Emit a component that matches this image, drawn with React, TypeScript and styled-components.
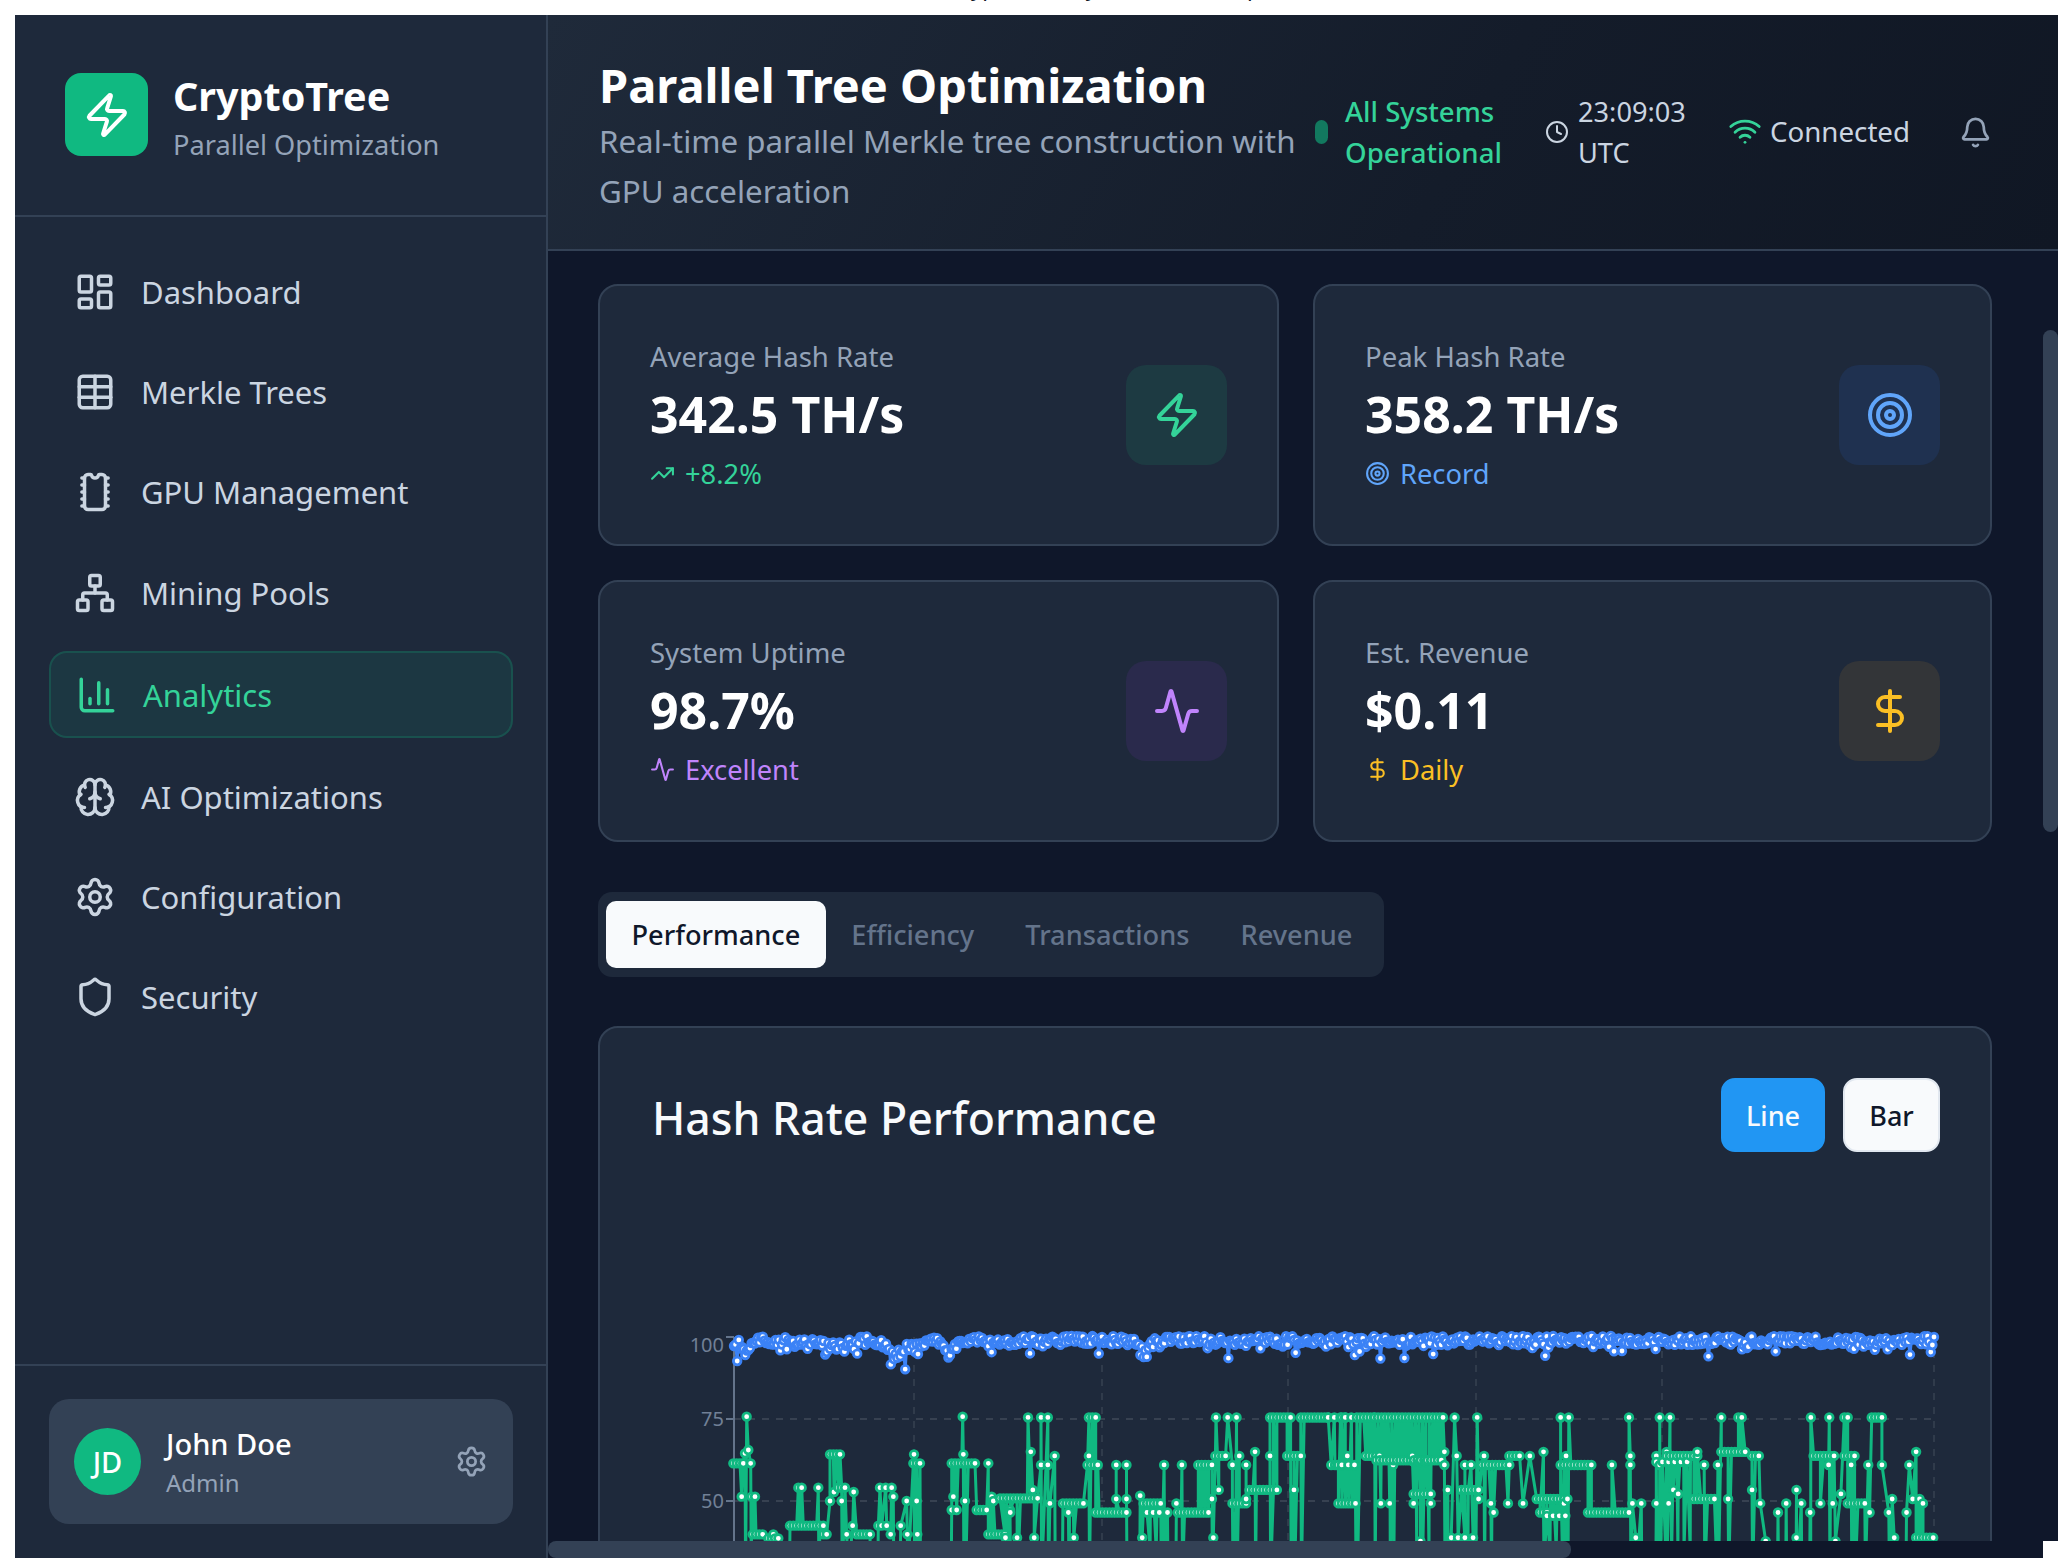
import React from "react";
import styled, { createGlobalStyle } from "styled-components";
import {
  Activity,
  Bell,
  Brain,
  ChartColumn,
  Clock,
  DollarSign,
  LayoutDashboard,
  Network,
  Settings,
  Shield,
  Table,
  Target,
  TrendingUp,
  Wifi,
  Zap,
} from "lucide-react";

const COLORS = {
  panel: "#1e293b",
  line: "#334155",
  deep: "#0f172a",
  green: "#10b981",
  mint: "#34d399",
  blue: "#60a5fa",
  purple: "#c084fc",
  amber: "#fbbf24",
  muted: "#94a3b8",
  soft: "#cbd5e1",
};

const FONT = `"Noto Sans", "Open Sans", Arial, sans-serif`;

const GlobalStyle = createGlobalStyle`
  html, body {
    margin: 0;
    padding: 0;
    background: #ffffff;
    font-family: ${FONT};
    overflow: hidden;
  }
  * { box-sizing: border-box; }
`;

const Page = styled.div`
  width: 2072px;
  height: 1560px;
  padding: 0 14px 2px 15px;
  display: flex;
  flex-direction: column;
  overflow: hidden;
`;

const ClippedLine = styled.div`
  height: 15px;
  overflow: hidden;
  display: flex;
`;

const ClippedGlyph = styled.span<{ $left: number }>`
  margin-left: ${(p) => p.$left}px;
  margin-top: -25px;
  font-size: 22px;
  line-height: 24px;
  color: #111827;
`;

const Shell = styled.div`
  flex: 1;
  min-height: 0;
  display: flex;
  overflow: hidden;
`;

const Sidebar = styled.aside`
  width: 533px;
  flex: none;
  background: ${COLORS.panel};
  border-right: 2px solid ${COLORS.line};
  display: flex;
  flex-direction: column;
`;

const Brand = styled.div`
  height: 202px;
  flex: none;
  padding: 58px 50px 0;
  border-bottom: 2px solid ${COLORS.line};
  display: flex;
  gap: 25px;
`;

const BrandMark = styled.div`
  width: 83px;
  height: 83px;
  border-radius: 16px;
  background: ${COLORS.green};
  color: #fff;
  display: flex;
  align-items: center;
  justify-content: center;
`;

const BrandName = styled.div`
  font-size: 39.5px;
  line-height: 50px;
  font-weight: 700;
  color: #fff;
  margin-top: -2px;
`;

const BrandTag = styled.div`
  font-size: 27.2px;
  line-height: 40px;
  color: ${COLORS.muted};
  margin-top: 4px;
`;

const Nav = styled.nav`
  flex: 1;
  padding: 33px 33px 0 34px;
  display: flex;
  flex-direction: column;
  gap: 16.6px;
`;

const NavItem = styled.div<{ $active?: boolean }>`
  height: ${(p) => (p.$active ? "87px" : "83.7px")};
  padding-left: 25px;
  display: flex;
  align-items: center;
  gap: 25px;
  font-size: 31px;
  color: ${(p) => (p.$active ? COLORS.mint : COLORS.soft)};
  border-radius: 18px;
  background: ${(p) => (p.$active ? "rgba(16,185,129,0.1)" : "transparent")};
  border: ${(p) => (p.$active ? "2px solid rgba(16,185,129,0.2)" : "none")};
`;

const SidebarFoot = styled.div`
  height: 194px;
  flex: none;
  padding: 33px 33px 0 34px;
  border-top: 2px solid ${COLORS.line};
`;

const UserCard = styled.div`
  height: 125px;
  border-radius: 20px;
  background: ${COLORS.line};
  padding: 0 25px;
  display: flex;
  align-items: center;
  gap: 25px;
`;

const Avatar = styled.div`
  width: 67px;
  height: 67px;
  border-radius: 50%;
  background: ${COLORS.green};
  color: #fff;
  font-size: 29px;
  font-weight: 500;
  display: flex;
  align-items: center;
  justify-content: center;
`;

const UserText = styled.div`
  flex: 1;
`;

const UserName = styled.div`
  font-size: 29px;
  line-height: 42px;
  font-weight: 500;
  color: #fff;
`;

const UserRole = styled.div`
  font-size: 24px;
  line-height: 36px;
  color: ${COLORS.muted};
`;

const Content = styled.div`
  flex: 1;
  min-width: 0;
  display: flex;
  flex-direction: column;
`;

const Header = styled.header`
  height: 236px;
  flex: none;
  padding: 0 66px 0 51px;
  background: linear-gradient(120deg, #1f2a3a 0%, #141c2a 60%, #101724 100%);
  border-bottom: 2px solid ${COLORS.line};
  display: flex;
  align-items: center;
`;

const TitleBlock = styled.div`
  width: 716px;
  flex: none;
  margin-top: 5px;
`;

const PageTitle = styled.h1`
  margin: 0;
  font-size: 47px;
  line-height: 62px;
  font-weight: 700;
  color: #fff;
`;

const PageSub = styled.p`
  margin: 0;
  font-size: 31.3px;
  line-height: 50px;
  color: ${COLORS.muted};
`;

const StatusDot = styled.span`
  width: 13px;
  height: 24px;
  flex: none;
  border-radius: 7px;
  background: #12795f;
  margin-right: 17px;
`;

const StatusText = styled.div`
  width: 200px;
  flex: none;
  font-size: 27.6px;
  line-height: 41px;
  font-weight: 500;
  color: ${COLORS.mint};
`;

const ClockGroup = styled.div`
  display: flex;
  align-items: center;
  gap: 9px;
  color: ${COLORS.soft};
  font-size: 27.2px;
  line-height: 41px;
`;

const ClockText = styled.div`
  width: 150px;
`;

const LinkGroup = styled.div`
  display: flex;
  align-items: center;
  gap: 8px;
  color: ${COLORS.soft};
  font-size: 27.7px;
  margin-top: -2px;
`;

const BellSlot = styled.div`
  margin-left: auto;
  color: ${COLORS.muted};
  display: flex;
`;

const Main = styled.main`
  flex: 1;
  min-height: 0;
  position: relative;
  overflow: hidden;
  background: #0f172a;
  padding: 33px 66px 0 50px;
`;

const StatGrid = styled.div`
  display: grid;
  grid-template-columns: 681px 679px;
  gap: 34px;
`;

const StatCard = styled.div`
  height: 262px;
  background: ${COLORS.panel};
  border: 2px solid ${COLORS.line};
  border-radius: 20px;
  padding: 0 50px;
  display: flex;
  align-items: center;
  justify-content: space-between;
`;

const StatLabel = styled.div`
  font-size: 27.5px;
  line-height: 40px;
  color: ${COLORS.muted};
`;

const StatValue = styled.div`
  font-size: 50px;
  line-height: 66px;
  font-weight: 700;
  color: #fff;
  margin: 4px 0 7px;
`;

const StatNote = styled.div<{ $color: string }>`
  font-size: 27.3px;
  line-height: 40px;
  color: ${(p) => p.$color};
  display: flex;
  align-items: center;
  gap: 10px;
`;

const StatIcon = styled.div<{ $color: string; $tint: string }>`
  width: 101px;
  height: 100px;
  border-radius: 20px;
  background: ${(p) => p.$tint};
  color: ${(p) => p.$color};
  display: flex;
  align-items: center;
  justify-content: center;
`;

const TabBar = styled.div`
  width: 786px;
  height: 85px;
  margin-top: 50px;
  padding: 9px 8px;
  border-radius: 14px;
  background: ${COLORS.panel};
  display: flex;
`;

const Tab = styled.div<{ $active?: boolean }>`
  padding: 0 25.5px;
  border-radius: 10px;
  font-size: 27.2px;
  font-weight: 500;
  display: flex;
  align-items: center;
  color: ${(p) => (p.$active ? COLORS.deep : "#64748b")};
  background: ${(p) => (p.$active ? "#f8fafc" : "transparent")};
`;

const ChartCard = styled.section`
  margin-top: 49px;
  height: 900px;
  background: ${COLORS.panel};
  border: 2px solid ${COLORS.line};
  border-radius: 20px;
  padding: 50px 50px 0 52px;
`;

const ChartHead = styled.div`
  display: flex;
  justify-content: space-between;
  align-items: center;
`;

const ChartTitle = styled.h2`
  margin: 0;
  padding-top: 5px;
  font-size: 44.6px;
  font-weight: 500;
  color: #f8fafc;
`;

const ChartSwitch = styled.div`
  display: flex;
  gap: 18px;
`;

const SwitchButton = styled.button<{ $active?: boolean }>`
  height: 74px;
  width: ${(p) => (p.$active ? "104px" : "97px")};
  padding: 0;
  border-radius: 14px;
  font-family: inherit;
  font-size: 27px;
  font-weight: 500;
  color: ${(p) => (p.$active ? "#f8fafc" : COLORS.deep)};
  background: ${(p) => (p.$active ? "#2196f3" : "#f8fafc")};
  border: 2px solid ${(p) => (p.$active ? "#2196f3" : "#e2e8f0")};
`;

const ChartSvg = styled.svg`
  display: block;
  margin-top: 128px;
  overflow: visible;
`;

const AxisLabel = styled.text`
  font-family: ${FONT};
  font-size: 20px;
  fill: #718096;
  text-anchor: end;
`;

const ThumbY = styled.div`
  position: absolute;
  right: 0;
  top: 79px;
  width: 15px;
  height: 502px;
  border-radius: 8px;
  background: ${COLORS.line};
`;

const ThumbX = styled.div`
  position: absolute;
  left: 0;
  bottom: 0;
  width: 1023px;
  height: 17px;
  border-radius: 8px;
  background: ${COLORS.line};
`;

const TrackX = styled.div`
  position: absolute;
  left: 0;
  right: 0;
  bottom: 0;
  height: 17px;
  background: #0f172a;
`;

const ScrollCorner = styled.div`
  position: absolute;
  right: 0;
  bottom: 0;
  width: 15px;
  height: 17px;
  background: #ffffff;
`;

// chip outline with a notch on top and pins on both long sides
const ChipIcon: React.FC<{ size?: number; strokeWidth?: number }> = ({ size = 24, strokeWidth = 2 }) => (
  <svg
    width={size}
    height={size}
    viewBox="0 0 24 24"
    fill="none"
    stroke="currentColor"
    strokeWidth={strokeWidth}
    strokeLinecap="round"
    strokeLinejoin="round"
  >
    <path d="M18 4h1.5M18 8h1.5M18 12h1.5M18 16h1.5M18 20h1.5M4.5 4H6M4.5 8H6M4.5 12H6M4.5 16H6M4.5 20H6" />
    <path d="M8 2a2 2 0 0 0-2 2v16a2 2 0 0 0 2 2h8a2 2 0 0 0 2-2V4a2 2 0 0 0-2-2h-1.5c-.276 0-.494.227-.562.495a2 2 0 0 1-3.876 0C9.994 2.227 9.776 2 9.5 2z" />
  </svg>
);

type Pt = [number, number];

function mulberry(seed: number) {
  return () => {
    seed = (seed + 0x6d2b79f5) | 0;
    let t = Math.imul(seed ^ (seed >>> 15), 1 | seed);
    t = (t + Math.imul(t ^ (t >>> 7), 61 | t)) ^ t;
    return ((t ^ (t >>> 14)) >>> 0) / 4294967296;
  };
}

// tokens read off the chart: "x,y", "x1-x2,y" for a run, "x1-x2,y,y2" for a run that alternates
const LEFT_TOKENS =
  "160-190,430 185,530 200-207,290 195,400 205,390 190,430 212,430 215-230,530 218-255,643 280,643 265-298,655 330-430,617 355-368,503 415,503 430-445,643 450,543 450-480,403 462,516 475-503,503 485,543 500,643 518,617 521,516 530-570,643 595-605,617 600,503 617,503 620,617 632,643 635,503 640,530 662,617 680,543 682,643 702,403 700-720,430 710,543 712,643 815,570 820-825,530 815-890,430 830,570 848,290 850,403 855,543 890-920,570 925,430 935,530 940,543 925-975,643 990,570";

const RIGHT_TOKENS =
  "0-55,648 8,765 15,690 25,765 41,408 45,510 48,623 50,765 60,549 60,408 70,408 70,549 73,663 80,522 92-125,663 100,690 108,765 130-140,408 130,522 128-143,549 140-185,690 170,549 170,650 185,549 185,650 205,640 208,765 210-235,663 215-235,690,800 240,549 245,690 258,663 266,549 260-305,690 290-310,549 310,650 312,765 316,408 320,623 315-330,522 333,408 340,549 346,408 350,522 340-360,663 360,549 360,650 373,510 365-405,623 395,522 395-425,408 430,623 420-440,522 440-480,408 480-500,408,549 490-500,549 500-505,408 508,522 505-522,408,549 522-548,408 495-520,663 535-555,522 548-650,408,535 557,663 570,663 575,549 603,522 605-630,635 605,663 605-630,540,800 630,663 615,775 650,510 650,549 655,623 665,408 668,522 660,765 670,765 680,765 692,765 675-700,623 698,408 680-695,549,800 700,650 708,522 705-745,549 718,663 722,690 743,663 745-760,522 765,663 775,522 795,510 785-830,650 790-800,690 800-830,700,800 820,408 832,408 828,522 820-865,549 825,663 860-920,690 895,549 920,408 922,522 922,549 925,663 930,765 938,663 960,663 965,549 965,408 975,510 980,408 960,522 975-1020,522 960-1010,540,800 978,663 985,623 992,635 1015-1048,650 1020,510 1030,549 1050,549 1055,408 1055-1090,510 1065,650 1080-1088,408 1100-1112,522 1100,623 1112,663 1120,775 1138,690 1150,663 1165,623 1165,765 1172,663 1185,690 1186,408 1190-1220,522 1200,663 1212,549 1213,408 1218,663 1222,775 1230,635 1235-1243,408 1235-1250,522 1240-1265,663 1245,549 1270,549 1272,690 1275-1290,408 1290,549 1300,690 1305,650 1308,765 1326,690 1330,549 1335,650 1340,510 1345,650 1350,663 1340-1365,765";

function parseTokens(tokens: string, toX: (d: number) => number, toY: (d: number) => number, step: number): Pt[] {
  const out: Pt[] = [];
  const rnd = mulberry(tokens.length);
  tokens.split(" ").forEach((tok) => {
    const [xs, ys, alt] = tok.split(",");
    const [a, b] = xs.split("-").map(Number);
    const y = Number(ys);
    if (b === undefined) {
      out.push([toX(a), toY(y)]);
      if (rnd() < 0.3) out.push([toX(a) + 0.6, 1575]);
      return;
    }
    const runStep = alt ? (b - a > 80 ? 2.5 : 4.5) : step;
    let flip = false;
    for (let d = a; d <= b; d += runStep) {
      const v = alt && flip ? Number(alt) : y;
      out.push([toX(d), toY(v)]);
      flip = !flip;
    }
    if (rnd() < 0.25) out.push([toX(b) + 0.6, 1575]);
  });
  out.sort((p, q) => p[0] - q[0]);
  // a wide gap means the series ran below the visible part of the chart
  const filled: Pt[] = [];
  out.forEach((p, i) => {
    const prev = out[i - 1];
    if (prev && p[0] - prev[0] > 7) {
      filled.push([prev[0] + 0.5, 1575], [p[0] - 0.5, 1575]);
    }
    filled.push(p);
  });
  return filled;
}

const greenPoints: Pt[] = [
  ...parseTokens(LEFT_TOKENS, (d) => 680 + d / 3, (d) => 1320 + d / 3, 10),
  ...parseTokens(RIGHT_TOKENS, (d) => 1000 + d / 1.4627, (d) => 1280 + d / 2.968, 5),
];

const bluePoints: Pt[] = (() => {
  const rnd = mulberry(41);
  const dips: [number, number, number][] = [
    [745, 6, 10],
    [800, 10, 3],
    [838, 8, 9],
    [900, 12, 18],
    [950, 6, 12],
    [1000, 8, 4],
    [1143, 5, 16],
  ];
  const pts: Pt[] = [];
  for (let x = 734; x <= 1934; x += 1.6) {
    let y = 1336 + rnd() * 9;
    const r = rnd();
    if (r > 0.95) y += 7 + rnd() * 7;
    else if (r > 0.88) y += 3 + rnd() * 4;
    dips.forEach(([c, w, depth]) => {
      const k = Math.exp(-((x - c) * (x - c)) / (2 * w * w));
      y += k * depth * (0.5 + rnd() * 0.6);
    });
    pts.push([x, y]);
  }
  pts[0][1] = 1346;
  pts[2][1] = 1361;
  const n = pts.length;
  pts[n - 3][1] = 1352;
  pts[n - 2][1] = 1345;
  pts[n - 1][1] = 1337;
  return pts;
})();

const toPath = (pts: Pt[]) =>
  pts.map((p, i) => `${i ? "L" : "M"}${p[0].toFixed(1)} ${p[1].toFixed(1)}`).join("");

const GRID_X = [914, 1102, 1288, 1476, 1662, 1934];

const Series: React.FC<{ points: Pt[]; color: string }> = ({ points, color }) => (
  <g>
    <path d={toPath(points)} fill="none" stroke={color} strokeWidth={3} strokeLinejoin="round" />
    {points.map((p, i) => (
      <circle key={i} cx={p[0]} cy={p[1]} r={3.8} fill="#fff" stroke={color} strokeWidth={2.8} />
    ))}
  </g>
);

const HashChart: React.FC = () => (
  <ChartSvg width={1290} height={320} viewBox="652 1280 1290 320">
    {[1419, 1501].map((y) => (
      <line key={y} x1={734} x2={1934} y1={y} y2={y} stroke="#374151" strokeWidth={2} strokeDasharray="7 7" />
    ))}
    {GRID_X.map((x) => (
      <line key={x} x1={x} x2={x} y1={1337} y2={1600} stroke="#374151" strokeWidth={1.5} strokeDasharray="7 7" />
    ))}
    <line x1={734} x2={734} y1={1337} y2={1600} stroke="#64748b" strokeWidth={2} />
    {[1337, 1419, 1501].map((y) => (
      <line key={y} x1={726} x2={734} y1={y} y2={y} stroke="#64748b" strokeWidth={2} />
    ))}
    <AxisLabel x={724} y={1352}>100</AxisLabel>
    <AxisLabel x={724} y={1426}>75</AxisLabel>
    <AxisLabel x={724} y={1508}>50</AxisLabel>
    <Series points={bluePoints} color="#3b82f6" />
    <Series points={greenPoints} color={COLORS.green} />
  </ChartSvg>
);

const NAV = [
  { label: "Dashboard", icon: LayoutDashboard },
  { label: "Merkle Trees", icon: Table },
  { label: "GPU Management", icon: ChipIcon },
  { label: "Mining Pools", icon: Network },
  { label: "Analytics", icon: ChartColumn, active: true },
  { label: "AI Optimizations", icon: Brain },
  { label: "Configuration", icon: Settings },
  { label: "Security", icon: Shield },
];

const STATS = [
  { label: "Average Hash Rate", value: "342.5 TH/s", note: "+8.2%", noteIcon: TrendingUp, icon: Zap, color: COLORS.mint, tint: "#1d3a42" },
  { label: "Peak Hash Rate", value: "358.2 TH/s", note: "Record", noteIcon: Target, icon: Target, color: COLORS.blue, tint: "#1f3150" },
  { label: "System Uptime", value: "98.7%", note: "Excellent", noteIcon: Activity, icon: Activity, color: COLORS.purple, tint: "#2a2a4c" },
  { label: "Est. Revenue", value: "$0.11", note: "Daily", noteIcon: DollarSign, icon: DollarSign, color: COLORS.amber, tint: "#333538" },
];

const App: React.FC = () => (
  <>
    <GlobalStyle />
    <Page>
      <ClippedLine>
        <ClippedGlyph $left={67}>,</ClippedGlyph>
        <ClippedGlyph $left={883}>yp</ClippedGlyph>
        <ClippedGlyph $left={90}>y</ClippedGlyph>
        <ClippedGlyph $left={150}>p</ClippedGlyph>
      </ClippedLine>
      <Shell>
        <Sidebar>
          <Brand>
            <BrandMark>
              <Zap size={48} strokeWidth={2} />
            </BrandMark>
            <div>
              <BrandName>CryptoTree</BrandName>
              <BrandTag>Parallel Optimization</BrandTag>
            </div>
          </Brand>
          <Nav>
            {NAV.map(({ label, icon: Icon, active }) => (
              <NavItem key={label} $active={active}>
                <Icon size={42} strokeWidth={2} />
                {label}
              </NavItem>
            ))}
          </Nav>
          <SidebarFoot>
            <UserCard>
              <Avatar>JD</Avatar>
              <UserText>
                <UserName>John Doe</UserName>
                <UserRole>Admin</UserRole>
              </UserText>
              <Settings size={33} color="#94a3b8" strokeWidth={2} />
            </UserCard>
          </SidebarFoot>
        </Sidebar>
        <Content>
          <Header>
            <TitleBlock>
              <PageTitle>Parallel Tree Optimization</PageTitle>
              <PageSub>Real-time parallel Merkle tree construction with GPU acceleration</PageSub>
            </TitleBlock>
            <StatusDot />
            <StatusText>All Systems Operational</StatusText>
            <ClockGroup>
              <Clock size={24} strokeWidth={2} />
              <ClockText>23:09:03 UTC</ClockText>
            </ClockGroup>
            <LinkGroup>
              <Wifi size={34} color={COLORS.mint} strokeWidth={2} />
              Connected
            </LinkGroup>
            <BellSlot>
              <Bell size={33} strokeWidth={2} />
            </BellSlot>
          </Header>
          <Main>
            <StatGrid>
              {STATS.map(({ label, value, note, noteIcon: NoteIcon, icon: Icon, color, tint }) => (
                <StatCard key={label}>
                  <div>
                    <StatLabel>{label}</StatLabel>
                    <StatValue>{value}</StatValue>
                    <StatNote $color={color}>
                      <NoteIcon size={25} strokeWidth={2} />
                      {note}
                    </StatNote>
                  </div>
                  <StatIcon $color={color} $tint={tint}>
                    <Icon size={48} strokeWidth={2} />
                  </StatIcon>
                </StatCard>
              ))}
            </StatGrid>
            <TabBar>
              <Tab $active>Performance</Tab>
              <Tab>Efficiency</Tab>
              <Tab>Transactions</Tab>
              <Tab>Revenue</Tab>
            </TabBar>
            <ChartCard>
              <ChartHead>
                <ChartTitle>Hash Rate Performance</ChartTitle>
                <ChartSwitch>
                  <SwitchButton $active>Line</SwitchButton>
                  <SwitchButton>Bar</SwitchButton>
                </ChartSwitch>
              </ChartHead>
              <HashChart />
            </ChartCard>
            <ThumbY />
            <TrackX />
            <ThumbX />
            <ScrollCorner />
          </Main>
        </Content>
      </Shell>
    </Page>
  </>
);

export default App;
